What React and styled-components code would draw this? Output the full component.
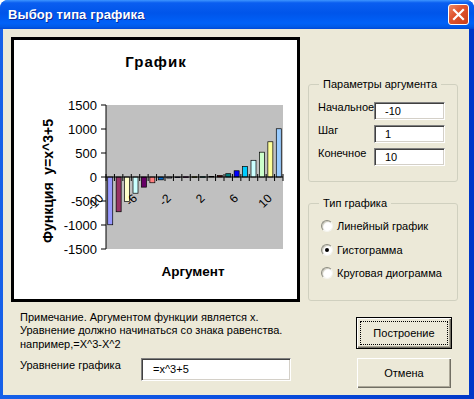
import React from "react";
import styled, { createGlobalStyle } from "styled-components";

const GlobalStyle = createGlobalStyle`
  html, body { margin: 0; padding: 0; background: #fff; }
  body { font-family: "Liberation Sans", Arial, sans-serif; font-size: 11px; color: #000; }
  * { box-sizing: border-box; }
`;

const PALETTE = [
  "#9999FF", "#993366", "#FFFFCC", "#CCFFFF", "#660066", "#FF8080", "#0066CC",
  "#CCCCFF", "#000080", "#FF00FF", "#FFFF00", "#00FFFF", "#800080", "#800000",
  "#008080", "#0000FF", "#00CCFF", "#CCFFFF", "#CCFFCC", "#FFFF99", "#99CCFF",
];

const values = Array.from({ length: 21 }, (_, i) => (i - 10) ** 3 + 5);

// plot area in page coords
const PX0 = 106;
const PX1 = 283;
const PY0 = 105;
const PY1 = 249;
const ZERO = 177;
const CAT = (PX1 - PX0) / 21;
const toY = (v) => ZERO - v * 0.048;

const Chart = () => (
  <svg width="283" height="259" viewBox="14 40 283 259" style={{ display: "block" }}>
    <text x="156" y="67" textAnchor="middle" fontFamily="Liberation Sans" fontWeight="bold" fontSize="15" letterSpacing="1">
      График
    </text>
    <rect x={PX0} y={PY0} width={PX1 - PX0} height={PY1 - PY0} fill="#C0C0C0" />
    {values.map((v, i) => {
      const y = toY(v);
      const top = Math.min(y, ZERO);
      const h = Math.max(Math.abs(y - ZERO), 0.6);
      return (
        <rect
          key={i}
          x={PX0 + i * CAT + (CAT - 5) / 2}
          y={top}
          width="5"
          height={h}
          fill={PALETTE[i]}
          stroke="#000"
          strokeWidth="0.7"
        />
      );
    })}
    <line x1={PX0} y1={ZERO} x2={PX1} y2={ZERO} stroke="#000" strokeWidth="1" />
    {Array.from({ length: 22 }, (_, i) => (
      <line key={i} x1={PX0 + i * CAT} y1={ZERO - 3} x2={PX0 + i * CAT} y2={ZERO + 4} stroke="#000" strokeWidth="1" />
    ))}
    <line x1={PX0} y1={PY0} x2={PX0} y2={PY1} stroke="#000" strokeWidth="1" />
    {[1500, 1000, 500, 0, -500, -1000, -1500].map((v) => (
      <g key={v}>
        <line x1={PX0 - 5} y1={toY(v)} x2={PX0} y2={toY(v)} stroke="#000" strokeWidth="1" />
        <text x="97" y={toY(v) + 4.5} textAnchor="end" fontFamily="Liberation Sans" fontSize="13">
          {v}
        </text>
      </g>
    ))}
    {[-10, -6, -2, 2, 6, 10].map((x) => {
      const cx = PX0 + (x + 10 + 0.5) * CAT;
      return (
        <text
          key={x}
          transform={`translate(${cx - 6},199) rotate(-45)`}
          textAnchor="end"
          fontFamily="Liberation Sans"
          fontSize="12"
        >
          {x}
        </text>
      );
    })}
    <text
      transform="translate(53,181) rotate(-90)"
      textAnchor="middle"
      fontFamily="Liberation Sans"
      fontWeight="bold"
      fontSize="14"
      style={{ whiteSpace: "pre" }}
    >
      {"Функция  y=x^3+5"}
    </text>
    <text x="193" y="276" textAnchor="middle" fontFamily="Liberation Sans" fontWeight="bold" fontSize="13.5">
      Аргумент
    </text>
  </svg>
);

export default function App() {
  return (
    <>
      <GlobalStyle />
      <Window>
        <TitleBar>
          <Title>Выбор типа графика</Title>
          <CloseButton>
            <svg width="13" height="13" viewBox="0 0 13 13">
              <path d="M2 2 L11 11 M11 2 L2 11" stroke="#fff" strokeWidth="2.2" strokeLinecap="square" />
            </svg>
          </CloseButton>
        </TitleBar>
        <Body>
          <TopRow>
            <ChartFrame>
              <Chart />
            </ChartFrame>
            <SideColumn>
              <Group>
                <Legend>Параметры аргумента</Legend>
                <ParamGrid>
                  <ParamLabel>Начальное</ParamLabel>
                  <Field width={71} height={18} defaultValue="-10" />
                  <ParamLabel>Шаг</ParamLabel>
                  <Field width={71} height={18} defaultValue="1" />
                  <ParamLabel>Конечное</ParamLabel>
                  <Field width={71} height={18} defaultValue="10" />
                </ParamGrid>
              </Group>
              <Group>
                <Legend>Тип графика</Legend>
                <RadioList>
                  <RadioRow>
                    <RadioDot />
                    Линейный график
                  </RadioRow>
                  <RadioRow>
                    <RadioDot checked />
                    Гистограмма
                  </RadioRow>
                  <RadioRow>
                    <RadioDot />
                    Круговая диограмма
                  </RadioRow>
                </RadioList>
              </Group>
            </SideColumn>
          </TopRow>
          <BottomRow>
            <NoteColumn>
              <Note>
                Примечание. Аргументом функции является х.
                <br />
                Уравнение должно начинаться со знака равенства.
                <br />
                например,=X^3-X^2
              </Note>
              <EquationRow>
                <EquationLabel>Уравнение графика</EquationLabel>
                <Field width={150} height={23} pad={11} defaultValue="=x^3+5" />
              </EquationRow>
            </NoteColumn>
            <ButtonColumn>
              <Button primary>Построение</Button>
              <Button>Отмена</Button>
            </ButtonColumn>
          </BottomRow>
        </Body>
      </Window>
    </>
  );
}

const Window = styled.div`
  width: 474px;
  height: 399px;
  display: flex;
  flex-direction: column;
  background: linear-gradient(to right, #1660e8 0%, #0a4fe0 50%, #0038c8 100%);
  border-radius: 8px 8px 0 0;
  overflow: hidden;
`;

const TitleBar = styled.div`
  height: 29px;
  flex: none;
  display: flex;
  align-items: center;
  justify-content: space-between;
  padding: 0 5px 0 8px;
  background: linear-gradient(
    to bottom,
    #3d95ff 0%,
    #0a5ef0 10%,
    #0055ea 45%,
    #0061f8 80%,
    #005ae8 92%,
    #0048d8 100%
  );
`;

const Title = styled.span`
  color: #fff;
  font-size: 13px;
  font-weight: bold;
  text-shadow: 1px 1px 0 #0a2a9a;
  letter-spacing: 0.1px;
`;

const CloseButton = styled.div`
  width: 21px;
  height: 21px;
  display: flex;
  align-items: center;
  justify-content: center;
  border: 1px solid #fff;
  border-radius: 3px;
  background: linear-gradient(135deg, #ec8a68 0%, #e0552f 40%, #c93d1b 100%);
`;

const Body = styled.div`
  flex: 1;
  margin: 0 5px 4px 3px;
  background: #ece9d8;
  padding: 8px 0 0 8px;
  display: flex;
  flex-direction: column;
`;

const TopRow = styled.div`
  display: flex;
  gap: 8px;
`;

const ChartFrame = styled.div`
  width: 289px;
  height: 265px;
  border: 3px solid #000;
  background: #fff;
`;

const SideColumn = styled.div`
  width: 150px;
  padding-top: 40px;
  display: flex;
  flex-direction: column;
  gap: 14px;
`;

const Group = styled.fieldset`
  margin: 0;
  padding: 0;
  height: 105px;
  border: 1px solid #d0d0bf;
  border-radius: 3px;
  min-width: 0;
`;

const Legend = styled.legend`
  margin-left: 10px;
  padding: 0 4px;
  line-height: 14px;
  font-size: 11px;
`;

const ParamGrid = styled.div`
  display: grid;
  grid-template-columns: 56px 71px;
  row-gap: 5px;
  padding: 11px 0 0 9px;
`;

const ParamLabel = styled.span`
  line-height: 13px;
  margin-top: -1px;
  align-self: start;
  white-space: nowrap;
`;

const Field = styled.input.attrs({ readOnly: true })`
  width: ${(p) => p.width}px;
  height: ${(p) => p.height}px;
  padding: 0 0 0 ${(p) => p.pad || 10}px;
  margin: 0;
  font-family: "Liberation Sans", Arial, sans-serif;
  font-size: 11px;
  color: #000;
  background: #fff;
  border: 1px solid;
  border-color: #808080 #ffffff #ffffff #808080;
  box-shadow: inset 1px 1px 0 #404040, inset -1px -1px 0 #d4d0c8;
  outline: none;
`;

const RadioList = styled.div`
  display: flex;
  flex-direction: column;
  gap: 7.5px;
  padding: 8px 0 0 12px;
`;

const RadioRow = styled.label`
  display: flex;
  align-items: center;
  gap: 4px;
  height: 16px;
  font-size: 11px;
`;

const RadioDot = styled.span`
  width: 12px;
  height: 12px;
  border-radius: 50%;
  background: #fff;
  border: 1px solid;
  border-color: #8c8c80 #f4f4ee #f4f4ee #8c8c80;
  box-shadow: inset 1px 1px 1px #c8c6b8;
  display: flex;
  align-items: center;
  justify-content: center;
  &::after {
    content: "";
    width: 4px;
    height: 4px;
    border-radius: 50%;
    background: ${(p) => (p.checked ? "#000" : "transparent")};
  }
`;

const BottomRow = styled.div`
  display: flex;
  justify-content: space-between;
`;

const NoteColumn = styled.div`
  padding: 9px 0 0 9px;
  display: flex;
  flex-direction: column;
`;

const Note = styled.p`
  margin: 0;
  line-height: 13.3px;
  font-size: 11px;
`;

const EquationRow = styled.div`
  display: flex;
  align-items: flex-start;
  margin-top: 7px;
`;

const EquationLabel = styled.span`
  width: 121px;
  line-height: 13px;
  margin-top: 1px;
`;

const ButtonColumn = styled.div`
  width: 96px;
  margin: 15px 17px 0 0;
  display: flex;
  flex-direction: column;
  gap: 8px;
`;

const Button = styled.button`
  position: relative;
  height: 32px;
  width: 96px;
  padding: 0;
  font-family: "Liberation Sans", Arial, sans-serif;
  font-size: 11px;
  color: #000;
  background: #ece9d8;
  border: 1px solid ${(p) => (p.primary ? "#000" : "#ece9d8")};
  box-shadow: inset 1px 1px 0 #fff, inset -1px -1px 0 #716f64, inset -2px -2px 0 #aca899;
  &::after {
    content: "";
    display: ${(p) => (p.primary ? "block" : "none")};
    position: absolute;
    inset: 3px;
    border: 1px dotted #000;
  }
`;
